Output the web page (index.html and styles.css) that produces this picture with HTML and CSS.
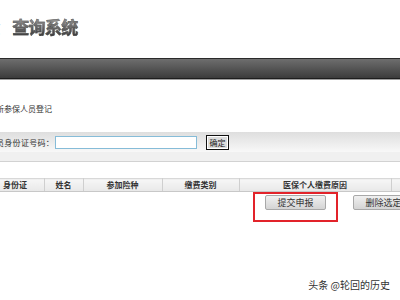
FILE: index.html
```html
<!DOCTYPE html>
<html lang="zh-CN">
<head>
<meta charset="UTF-8" />
<title>保险查询系统</title>
<link rel="stylesheet" href="styles.css">
</head>
<body>

<div class="header">
  <h1 class="title"><span class="title-cut">险</span>查询系统</h1>
</div>
<div class="navbar"></div>

<div class="section-title">新参保人员登记</div>

<div class="search-bar">
  <label class="search-label" for="idno">员身份证号码：</label>
  <input id="idno" class="search-input" type="text" />
  <button class="btn-ok">确定</button>
</div>
<div class="toolbar"></div>

<table class="grid">
  <tr>
    <th class="col-id">身份证</th>
    <th class="col-name">姓名</th>
    <th class="col-type">参加险种</th>
    <th class="col-cat">缴费类别</th>
    <th class="col-reason">医保个人缴费原因</th>
    <th class="col-end"></th>
  </tr>
</table>

<div class="actions">
  <div class="mark">
    <button class="btn">提交申报</button>
  </div>
  <button class="btn btn-del">删除选定</button>
</div>

<div class="watermark">头条 @轮回的历史</div>

</body>
</html>
```

FILE: styles.css
```css
body {
  margin: 0;
  background: #fff;
  color: #333;
  font-family: "Noto Sans CJK SC", "Liberation Sans", sans-serif;
  width: 400px;
  height: 300px;
  overflow: hidden;
  position: relative;
}
.header {
  height: 58px;
  display: flex;
  align-items: center;
}
.title {
  margin: 0 0 5px -17px;
  font-size: 17px;
  font-weight: 700;
  letter-spacing: -0.7px;
  line-height: 20px;
  white-space: nowrap;
  background: linear-gradient(#a0a0a0, #333);
  -webkit-background-clip: text;
  background-clip: text;
  color: transparent;
  -webkit-text-stroke: 0.4px #555;
}
.title-cut {
  margin-right: 13px;
}
.navbar {
  height: 19px;
  border-top: 1px solid #2a2a2a;
  border-bottom: 1px solid #1e1e1e;
  background: linear-gradient(#6e6e6e, #3c3c3c);
  box-shadow: 0 1px 0 #a0a0a0;
}
.section-title {
  height: 53px;
  box-sizing: border-box;
  padding-top: 24px;
  margin-left: -4px;
  font-size: 8px;
  line-height: 10px;
  margin-top: 1px;
}
.search-bar {
  height: 20px;
  display: flex;
  align-items: center;
  background: linear-gradient(#dedede, #f8f8f8);
  font-size: 8px;
  margin-top: -1px;
}
.search-label {
  margin-left: -4px;
  width: 59px;
  letter-spacing: 0.3px;
}
.search-input {
  width: 142px;
  height: 13px;
  box-sizing: border-box;
  border: 1px solid #86bcd8;
  padding: 0;
  margin: 0;
}
.btn-ok {
  margin-left: 9px;
  height: 15px;
  width: 23px;
  padding: 0;
  font-size: 8px;
  font-family: inherit;
  line-height: 11px;
  border: 1px solid #111;
  box-shadow: inset 0 0 0 1px #fff;
  background: #dcdcdc;
  color: #222;
}
.toolbar {
  height: 9px;
  background: #f0f0f0;
  border-bottom: 1px solid #d2d2d2;
}
.grid {
  margin-top: 16px;
  width: 400px;
  border-collapse: collapse;
  table-layout: fixed;
  font-size: 8px;
}
.grid th {
  height: 12px;
  padding: 0;
  line-height: 12px;
  font-weight: 700;
  color: #333;
  background: linear-gradient(#f6f6f6, #e8e8e8);
  border-top: 1px solid #d8d8d8;
  border-bottom: 1px solid #c8c8c8;
  border-right: 1px solid #cfcfcf;
  text-align: center;
  overflow: hidden;
  white-space: nowrap;
}
.grid .col-id { width: 44px; text-align: left; padding-left: 3px; box-sizing: border-box; }
.grid .col-name { width: 38px; }
.grid .col-type { width: 78px; }
.grid .col-cat { width: 76px; }
.grid .col-reason { width: 151px; }
.grid .col-end { border-right: none; }
.actions {
  display: flex;
  align-items: flex-start;
  margin-left: 253px;
}
.mark {
  display: flex;
  border: 2px solid #e2232a;
  padding: 1px 10px 10px 10px;
  width: 61px;
}
.btn {
  width: 61px;
  height: 15px;
  padding: 0;
  font-size: 9px;
  font-family: inherit;
  line-height: 13px;
  color: #333;
  border: 1px solid #a8a8a8;
  border-radius: 2px;
  background: linear-gradient(#f0f0f0, #d4d4d4);
}
.btn-del {
  margin-left: 15px;
  margin-top: 3px;
  flex: none;
}
.watermark {
  position: absolute;
  right: 10px;
  bottom: 8px;
  font-size: 10px;
  color: #333;
  text-shadow: 0 0 2px #fff;
}
```
